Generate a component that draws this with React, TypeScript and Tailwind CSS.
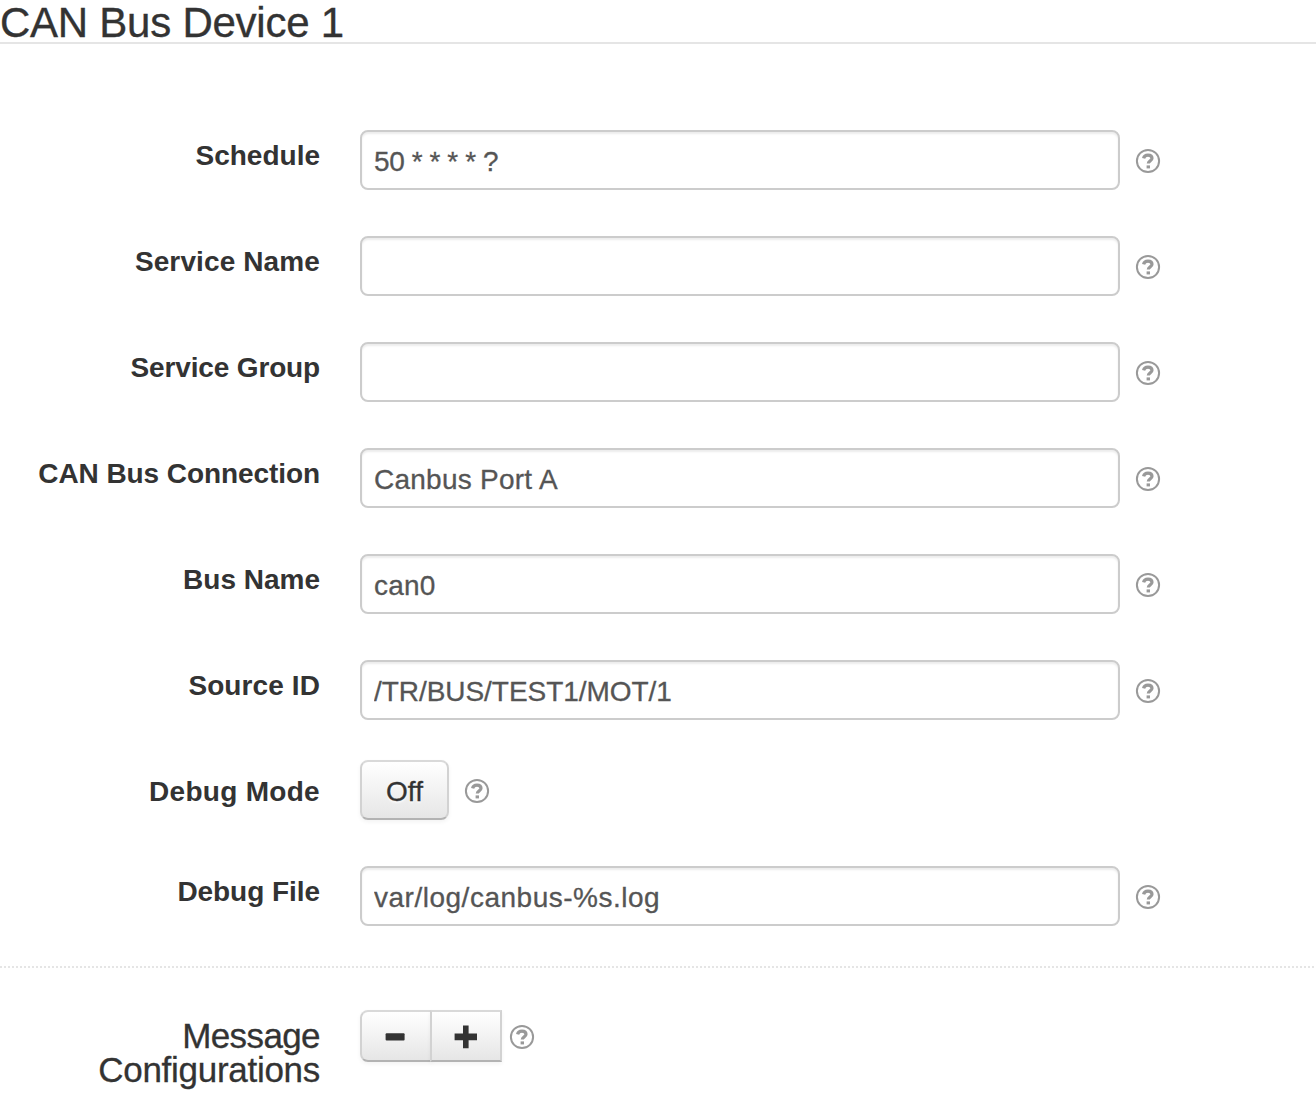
type Field = { label: string; value: string; labelTracking?: string; valueTracking?: string };

const fields: Field[] = [
  { label: "Schedule", value: "50 * * * * ?", valueTracking: "tracking-[-0.42px]" },
  { label: "Service Name", value: "", labelTracking: "tracking-[0.12px]" },
  { label: "Service Group", value: "", labelTracking: "tracking-[-0.15px]" },
  { label: "CAN Bus Connection", value: "Canbus Port A", labelTracking: "tracking-[-0.08px]", valueTracking: "tracking-[0.25px]" },
  { label: "Bus Name", value: "can0", valueTracking: "tracking-[0.2px]" },
  { label: "Source ID", value: "/TR/BUS/TEST1/MOT/1", labelTracking: "tracking-[0.1px]", valueTracking: "tracking-[-0.05px]" },
];

function Help({ className = "" }: { className?: string }) {
  return (
    <svg viewBox="0 0 26 26" className={`size-[26px] shrink-0 text-[#999999] ${className}`} fill="none" stroke="currentColor">
      <circle cx="13" cy="13" r="11.1" strokeWidth="2" />
      <path d="M8.6 10.4C9 8.2 10.8 7.1 13 7.1c2.3 0 4 1.1 4 3.1 0 2.9-3.7 2.4-3.7 5.4" strokeWidth="3.2" />
      <path d="M11.6 18.9h3.4" strokeWidth="3" />
    </svg>
  );
}

function TextRow({ label, value, labelTracking = "", valueTracking = "" }: Field) {
  return (
    <div className="flex h-[60px] items-start">
      <label className={`w-[320px] pt-[6px] text-right text-[28px] leading-[40px] font-bold whitespace-nowrap ${labelTracking}`}>{label}</label>
      <input
        type="text"
        aria-label={label}
        defaultValue={value}
        className={`ml-[40px] h-[60px] w-[760px] rounded-[8px] border-2 border-[#cccccc] bg-white px-[12px] pt-[4px] text-[28px] leading-[40px] text-[#555555] shadow-[inset_0_2px_2px_rgba(0,0,0,0.075)] outline-none [-webkit-text-stroke:0.3px_currentColor] ${valueTracking}`}
      />
      <Help className="mt-[18px] ml-[15px]" />
    </div>
  );
}

const buttonStyle =
  "border-2 border-t-[#d9d9d9] border-x-[#d2d2d2] border-b-[#b3b3b3] bg-linear-to-b from-white to-[#e6e6e6] shadow-[inset_0_2px_0_rgba(255,255,255,0.2),0_2px_4px_rgba(0,0,0,0.05)]";

export default function App() {
  return (
    <main className="h-[1114px] w-[1316px] bg-white font-['Liberation_Sans',Arial,sans-serif] text-[#333333]">
      <h1 className="h-[44px] border-b-2 border-[#e5e5e5] text-[42px] leading-[46px] tracking-[-0.25px] whitespace-nowrap [-webkit-text-stroke:0.35px_currentColor]">CAN Bus Device 1</h1>
      <form className="pt-[86px]">
        <div className="flex flex-col gap-[46px]">
          {fields.map((f) => (
            <TextRow key={f.label} {...f} />
          ))}
        </div>
        <div className="mt-[40px] flex h-[60px] items-start">
          <label className="w-[320px] pt-[12px] text-right text-[28px] leading-[40px] font-bold tracking-[0.3px] whitespace-nowrap">Debug Mode</label>
          <button type="button" className={`ml-[40px] h-[60px] w-[89px] rounded-[8px] pt-[4px] text-[28px] leading-[40px] [text-shadow:0_2px_2px_rgba(255,255,255,0.75)] [-webkit-text-stroke:0.3px_currentColor] ${buttonStyle}`}>
            Off
          </button>
          <Help className="mt-[18px] ml-[15px]" />
        </div>
        <div className="mt-[46px]">
          <TextRow label="Debug File" value="var/log/canbus-%s.log" labelTracking="tracking-[-0.05px]" valueTracking="tracking-[0.51px]" />
        </div>
        <div className="mt-[40px] h-[2px] bg-[repeating-linear-gradient(90deg,#e5e5e5_0_2px,transparent_2px_4px)]" />
        <div className="mt-[42px] flex items-start">
          <h2 className="w-[320px] pt-[9px] text-right text-[35px] leading-[34px] tracking-[-0.28px] [-webkit-text-stroke:0.3px_currentColor]">
            <span className="tracking-[-0.6px]">Message</span>
            <br />
            Configurations
          </h2>
          <div className="ml-[40px] flex">
            <button type="button" aria-label="Remove" className={`flex h-[52px] w-[72px] items-center justify-center rounded-l-[8px] ${buttonStyle}`}>
              <svg viewBox="0 0 22 24" className="mt-[2px] h-[24px] w-[22px]" fill="#333333">
                <rect x="0.6" y="8.3" width="19" height="7.2" rx="1" />
              </svg>
            </button>
            <button type="button" aria-label="Add" className={`-ml-[2px] flex h-[52px] w-[72px] items-center justify-center ${buttonStyle}`}>
              <svg viewBox="0 0 24 24" className="mt-[2px] size-[24px]" fill="#333333">
                <path d="M9 0.5h5.6v8h8.4v6.8h-8.4v8H9v-8H0.6V8.5H9z" />
              </svg>
            </button>
          </div>
          <Help className="mt-[14px] ml-[7px]" />
        </div>
      </form>
    </main>
  );
}
